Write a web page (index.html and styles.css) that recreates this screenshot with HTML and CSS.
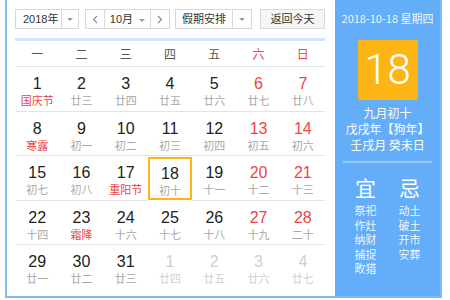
FILE: index.html
```html
<!DOCTYPE html>
<html lang="zh-CN">
<head>
  <meta charset="UTF-8">
  <title>万年历</title>
  <link rel="stylesheet" href="styles.css">
</head>
<body>

  <div class="calendar">
    <!-- Parte sinistra: mese -->
    <div class="main">
      <div class="toolbar">
        <div class="select year">
          <span class="select-text">2018年</span>
          <span class="select-arrow"><i class="caret"></i></span>
        </div>
        <div class="month-group">
          <span class="nav"><svg width="6" height="9" viewBox="0 0 6 9"><path d="M5 1 L1.5 4.5 L5 8" fill="none" stroke="#888" stroke-width="1.1"/></svg></span>
          <span class="month">10月 <i class="caret"></i></span>
          <span class="nav"><svg width="6" height="9" viewBox="0 0 6 9"><path d="M1 1 L4.5 4.5 L1 8" fill="none" stroke="#888" stroke-width="1.1"/></svg></span>
        </div>
        <div class="select holiday">
          <span class="select-text">假期安排</span>
          <span class="select-arrow"><i class="caret"></i></span>
        </div>
        <div class="btn-today">返回今天</div>
      </div>
      <div class="strip"></div>

      <div class="week">
        <span>一</span><span>二</span><span>三</span><span>四</span><span>五</span>
        <span class="red">六</span><span class="red">日</span>
      </div>

      <div class="days">
        <div class="day"><b>1</b><em class="fest">国庆节</em></div>
        <div class="day"><b>2</b><em>廿三</em></div>
        <div class="day"><b>3</b><em>廿四</em></div>
        <div class="day"><b>4</b><em>廿五</em></div>
        <div class="day"><b>5</b><em>廿六</em></div>
        <div class="day weekend"><b>6</b><em>廿七</em></div>
        <div class="day weekend"><b>7</b><em>廿八</em></div>

        <div class="day"><b>8</b><em class="fest">寒露</em></div>
        <div class="day"><b>9</b><em>初一</em></div>
        <div class="day"><b>10</b><em>初二</em></div>
        <div class="day"><b>11</b><em>初三</em></div>
        <div class="day"><b>12</b><em>初四</em></div>
        <div class="day weekend"><b>13</b><em>初五</em></div>
        <div class="day weekend"><b>14</b><em>初六</em></div>

        <div class="day"><b>15</b><em>初七</em></div>
        <div class="day"><b>16</b><em>初八</em></div>
        <div class="day"><b>17</b><em class="fest">重阳节</em></div>
        <div class="day today"><b>18</b><em>初十</em></div>
        <div class="day"><b>19</b><em>十一</em></div>
        <div class="day weekend"><b>20</b><em>十二</em></div>
        <div class="day weekend"><b>21</b><em>十三</em></div>

        <div class="day"><b>22</b><em>十四</em></div>
        <div class="day"><b>23</b><em class="fest">霜降</em></div>
        <div class="day"><b>24</b><em>十六</em></div>
        <div class="day"><b>25</b><em>十七</em></div>
        <div class="day"><b>26</b><em>十八</em></div>
        <div class="day weekend"><b>27</b><em>十九</em></div>
        <div class="day weekend"><b>28</b><em>二十</em></div>

        <div class="day"><b>29</b><em>廿一</em></div>
        <div class="day"><b>30</b><em>廿二</em></div>
        <div class="day"><b>31</b><em>廿三</em></div>
        <div class="day other"><b>1</b><em>廿四</em></div>
        <div class="day other"><b>2</b><em>廿五</em></div>
        <div class="day other"><b>3</b><em>廿六</em></div>
        <div class="day other"><b>4</b><em>廿七</em></div>
      </div>
    </div>

    <!-- Pannello destro: giorno selezionato -->
    <div class="side">
      <div class="side-date">2018-10-18 星期四</div>
      <div class="big-day">18</div>
      <div class="lunar">
        <p>九月初十</p>
        <p>戊戌年【狗年】</p>
        <p>壬戌月 癸未日</p>
      </div>
      <div class="side-line"></div>
      <div class="yiji">
        <div class="yiji-col">
          <h3>宜</h3>
          <p>祭祀</p><p>作灶</p><p>纳财</p><p>捕捉</p><p>畋猎</p>
        </div>
        <div class="yiji-col">
          <h3>忌</h3>
          <p>动土</p><p>破土</p><p>开市</p><p>安葬</p>
        </div>
      </div>
    </div>
  </div>

</body>
</html>
```

FILE: styles.css
```css
body, html {
  margin: 0;
  padding: 0;
  background-color: #fff;
  font-family: "Liberation Sans", "Noto Sans CJK SC", sans-serif;
}

.calendar {
  display: flex;
  width: 433px;
  height: 296px;
  margin-left: 5px;
  border: 2px solid #7fbaf5;
  border-top: none;
  background-color: #fff;
}

/* Mese */
.main {
  width: 328px;
  padding: 9px 10px 0 8px;
  box-sizing: border-box;
}

.toolbar {
  display: flex;
  align-items: center;
  height: 20px;
  font-size: 11px;
  color: #333;
}

.select {
  display: flex;
  height: 20px;
  box-sizing: border-box;
  border: 1px solid #d8d8d8;
  background-color: #fff;
}

.select-text {
  flex: 1;
  line-height: 18px;
  text-align: center;
}

.select-arrow {
  width: 16px;
  display: flex;
  justify-content: center;
  align-items: center;
  border-left: 1px solid #d8d8d8;
}

.caret {
  display: inline-block;
  width: 0;
  height: 0;
  border-left: 3px solid transparent;
  border-right: 3px solid transparent;
  border-top: 3px solid #999;
  vertical-align: middle;
}

.year {
  width: 64px;
  margin-right: 6px;
}

.year .select-text {
  text-align: left;
  padding-left: 7px;
}

.month-group {
  display: flex;
  width: 85px;
  height: 20px;
  box-sizing: border-box;
  border: 1px solid #d8d8d8;
  margin-right: 5px;
}

.nav {
  width: 18px;
  display: flex;
  justify-content: center;
  align-items: center;
}

.month {
  flex: 1;
  line-height: 18px;
  text-align: center;
  border-left: 1px solid #d8d8d8;
  border-right: 1px solid #d8d8d8;
}

.month .caret {
  margin-left: 3px;
}

.holiday {
  width: 77px;
  margin-right: 8px;
}

.holiday .select-arrow {
  width: 18px;
}

.btn-today {
  width: 65px;
  height: 20px;
  box-sizing: border-box;
  line-height: 18px;
  text-align: center;
  border: 1px solid #d8d8d8;
  background-color: #f5f5f5;
}

.strip {
  height: 3px;
  margin-top: 9px;
  background-color: #cfe5fc;
}

.week {
  display: grid;
  grid-template-columns: repeat(7, 1fr);
  height: 25px;
  border-bottom: 1px solid #e3e3e3;
  font-family: "Noto Sans CJK SC", sans-serif;
  font-size: 12px;
  line-height: 25px;
  text-align: center;
  color: #555;
}

.week .red {
  color: #ee4444;
}

.days {
  display: grid;
  grid-template-columns: repeat(7, 1fr);
  grid-auto-rows: 44.5px;
}

.day {
  box-sizing: border-box;
  border-bottom: 1px solid #e3e3e3;
  text-align: center;
  padding-top: 8px;
}

.days .day:nth-last-child(-n+7) {
  border-bottom: none;
}

.day b {
  display: block;
  font-size: 16px;
  font-weight: normal;
  line-height: 18px;
  color: #222;
}

.day em {
  display: block;
  font-style: normal;
  font-family: "Noto Sans CJK SC", sans-serif;
  font-size: 11px;
  line-height: 14px;
  color: #a8a8a8;
}

.day em.fest {
  color: #e84343;
}

.weekend b {
  color: #ee4444;
}

.other b,
.other em {
  color: #cfcfcf;
}

.today {
  border: 2px solid #fdb515;
  padding-top: 6px;
  margin-top: 1px;
  height: 43px;
}

/* Pannello destro */
.side {
  flex: 1;
  background-color: #64adf8;
  color: #fff;
  font-family: "Noto Sans CJK SC", sans-serif;
  text-align: center;
}

.side-date {
  margin-top: 10px;
  font-size: 11px;
  line-height: 16px;
  color: rgba(255, 255, 255, 0.92);
}

.big-day {
  width: 60px;
  height: 60px;
  margin: 14px auto 5px;
  background-color: #fdb515;
  border-radius: 2px;
  font-family: Roboto, "Liberation Sans", sans-serif;
  font-weight: 300;
  font-size: 42px;
  line-height: 60px;
}

.lunar p {
  margin: 0;
  font-size: 12px;
  line-height: 16px;
}

.side-line {
  height: 2px;
  margin: 8px 8px 0;
  background-color: rgba(255, 255, 255, 0.35);
}

.yiji {
  display: flex;
  justify-content: center;
  margin-top: 11px;
}

.yiji-col {
  width: 44px;
}

.yiji-col h3 {
  margin: 0 0 3px;
  font-size: 21px;
  font-weight: normal;
  line-height: 26px;
}

.yiji-col p {
  margin: 0;
  font-size: 11px;
  line-height: 14.5px;
  color: rgba(255, 255, 255, 0.92);
}
```
